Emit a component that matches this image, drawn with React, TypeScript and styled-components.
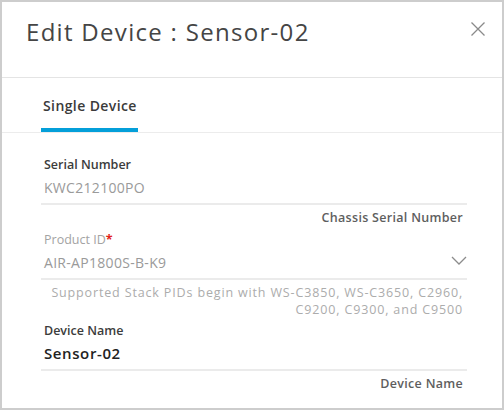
import styled, { createGlobalStyle } from "styled-components";

const GlobalStyle = createGlobalStyle`
    html, body {
        margin: 0;
        padding: 0;
        background: #ffffff;
    }
    body {
        font-family: "Open Sans", "Liberation Sans", Arial, sans-serif;
    }
`;

const Dialog = styled.div`
    width: 504px;
    height: 410px;
    box-sizing: border-box;
    border: 2px solid #cdcdcd;
    background: #fff;
    display: flex;
    flex-direction: column;
    overflow: hidden;
`;

const Header = styled.div`
    height: 76px;
    display: flex;
    justify-content: space-between;
    align-items: flex-start;
    padding: 14px 17px 0 24px;
    box-sizing: border-box;
    border-bottom: 1px solid #e4e4e4;
`;

const Title = styled.h1`
    margin: 0;
    font-size: 24px;
    line-height: 32px;
    font-weight: 400;
    color: #454545;
    letter-spacing: 1.3px;
`;

const CloseButton = styled.button`
    border: 0;
    background: none;
    padding: 0;
    margin-top: 6px;
    width: 14px;
    height: 14px;
    cursor: pointer;
    display: flex;
`;

const TabBar = styled.div`
    display: flex;
    padding-left: 39px;
    border-bottom: 1px solid #ececec;
`;

const Tab = styled.div<{ $active?: boolean }>`
    width: 97px;
    box-sizing: border-box;
    padding: 18px 2px 12px;
    font-size: 14px;
    line-height: 20px;
    font-weight: 600;
    letter-spacing: 0.4px;
    color: #3a3a3a;
    white-space: nowrap;
    border-bottom: 4px solid ${(p) => (p.$active ? "#049fd9" : "transparent")};
`;

const Form = styled.div`
    display: flex;
    flex-direction: column;
    padding: 24px 35px 0 39px;
`;

const Field = styled.div`
    display: flex;
    flex-direction: column;
`;

const Label = styled.label<{ $muted?: boolean }>`
    padding-left: 3px;
    font-size: 12.5px;
    line-height: 16px;
    font-weight: ${(p) => (p.$muted ? 400 : 600)};
    color: ${(p) => (p.$muted ? "#a3a3a3" : "#3c3c3c")};
`;

const Required = styled.span`
    color: #e2231a;
    font-weight: 700;
`;

const InputRow = styled.div`
    display: flex;
    align-items: flex-start;
    justify-content: space-between;
    height: 32px;
    box-sizing: border-box;
    padding: 5px 0 0 3px;
    border-bottom: 2px solid #ebebeb;
`;

const Value = styled.span<{ $strong?: boolean }>`
    font-size: ${(p) => (p.$strong ? 15 : 14)}px;
    line-height: 19px;
    letter-spacing: ${(p) => (p.$strong ? 0.6 : 0.3)}px;
    font-weight: ${(p) => (p.$strong ? 600 : 400)};
    color: ${(p) => (p.$strong ? "#222" : "#9a9a9a")};
`;

const ChevronBox = styled.span`
    display: flex;
    margin-top: 3px;
`;

const Help = styled.div<{ $light?: boolean }>`
    text-align: right;
    padding-right: 4px;
    margin-top: 4px;
    font-size: 12.5px;
    line-height: 17px;
    font-weight: ${(p) => (p.$light ? 400 : 600)};
    letter-spacing: ${(p) => (p.$light ? 0.85 : 0.3)}px;
    color: ${(p) => (p.$light ? "#acacac" : "#5e5e5e")};
`;

const Spacer = styled.div<{ $h: number }>`
    height: ${(p) => p.$h}px;
`;

const XIcon = () => (
    <svg width="14" height="14" viewBox="0 0 14 14">
        <path d="M0.5 0.5 L13.5 13.5 M13.5 0.5 L0.5 13.5" stroke="#8a8a8a" strokeWidth="1.3" fill="none" />
    </svg>
);

const Chevron = () => (
    <svg width="16" height="9" viewBox="0 0 16 9">
        <polyline points="1,1 8,8 15,1" stroke="#8c8c8c" strokeWidth="1.3" fill="none" />
    </svg>
);

const App = () => {
    return (
        <>
            <GlobalStyle />
            <Dialog>
                <Header>
                    <Title>Edit Device : Sensor-02</Title>
                    <CloseButton aria-label="Close">
                        <XIcon />
                    </CloseButton>
                </Header>
                <TabBar>
                    <Tab $active>Single Device</Tab>
                </TabBar>
                <Form>
                    <Field>
                        <Label>Serial Number</Label>
                        <InputRow>
                            <Value>KWC212100PO</Value>
                        </InputRow>
                        <Help>Chassis Serial Number</Help>
                    </Field>
                    <Spacer $h={6} />
                    <Field>
                        <Label $muted>
                            Product ID<Required>*</Required>
                        </Label>
                        <InputRow>
                            <Value>AIR-AP1800S-B-K9</Value>
                            <ChevronBox>
                                <Chevron />
                            </ChevronBox>
                        </InputRow>
                        <Help $light>
                            Supported Stack PIDs begin with WS-C3850, WS-C3650, C2960,
                            <br />
                            C9200, C9300, and C9500
                        </Help>
                    </Field>
                    <Spacer $h={5} />
                    <Field>
                        <Label>Device Name</Label>
                        <InputRow>
                            <Value $strong>Sensor-02</Value>
                        </InputRow>
                        <Help>Device Name</Help>
                    </Field>
                </Form>
            </Dialog>
        </>
    );
};

export default App;
